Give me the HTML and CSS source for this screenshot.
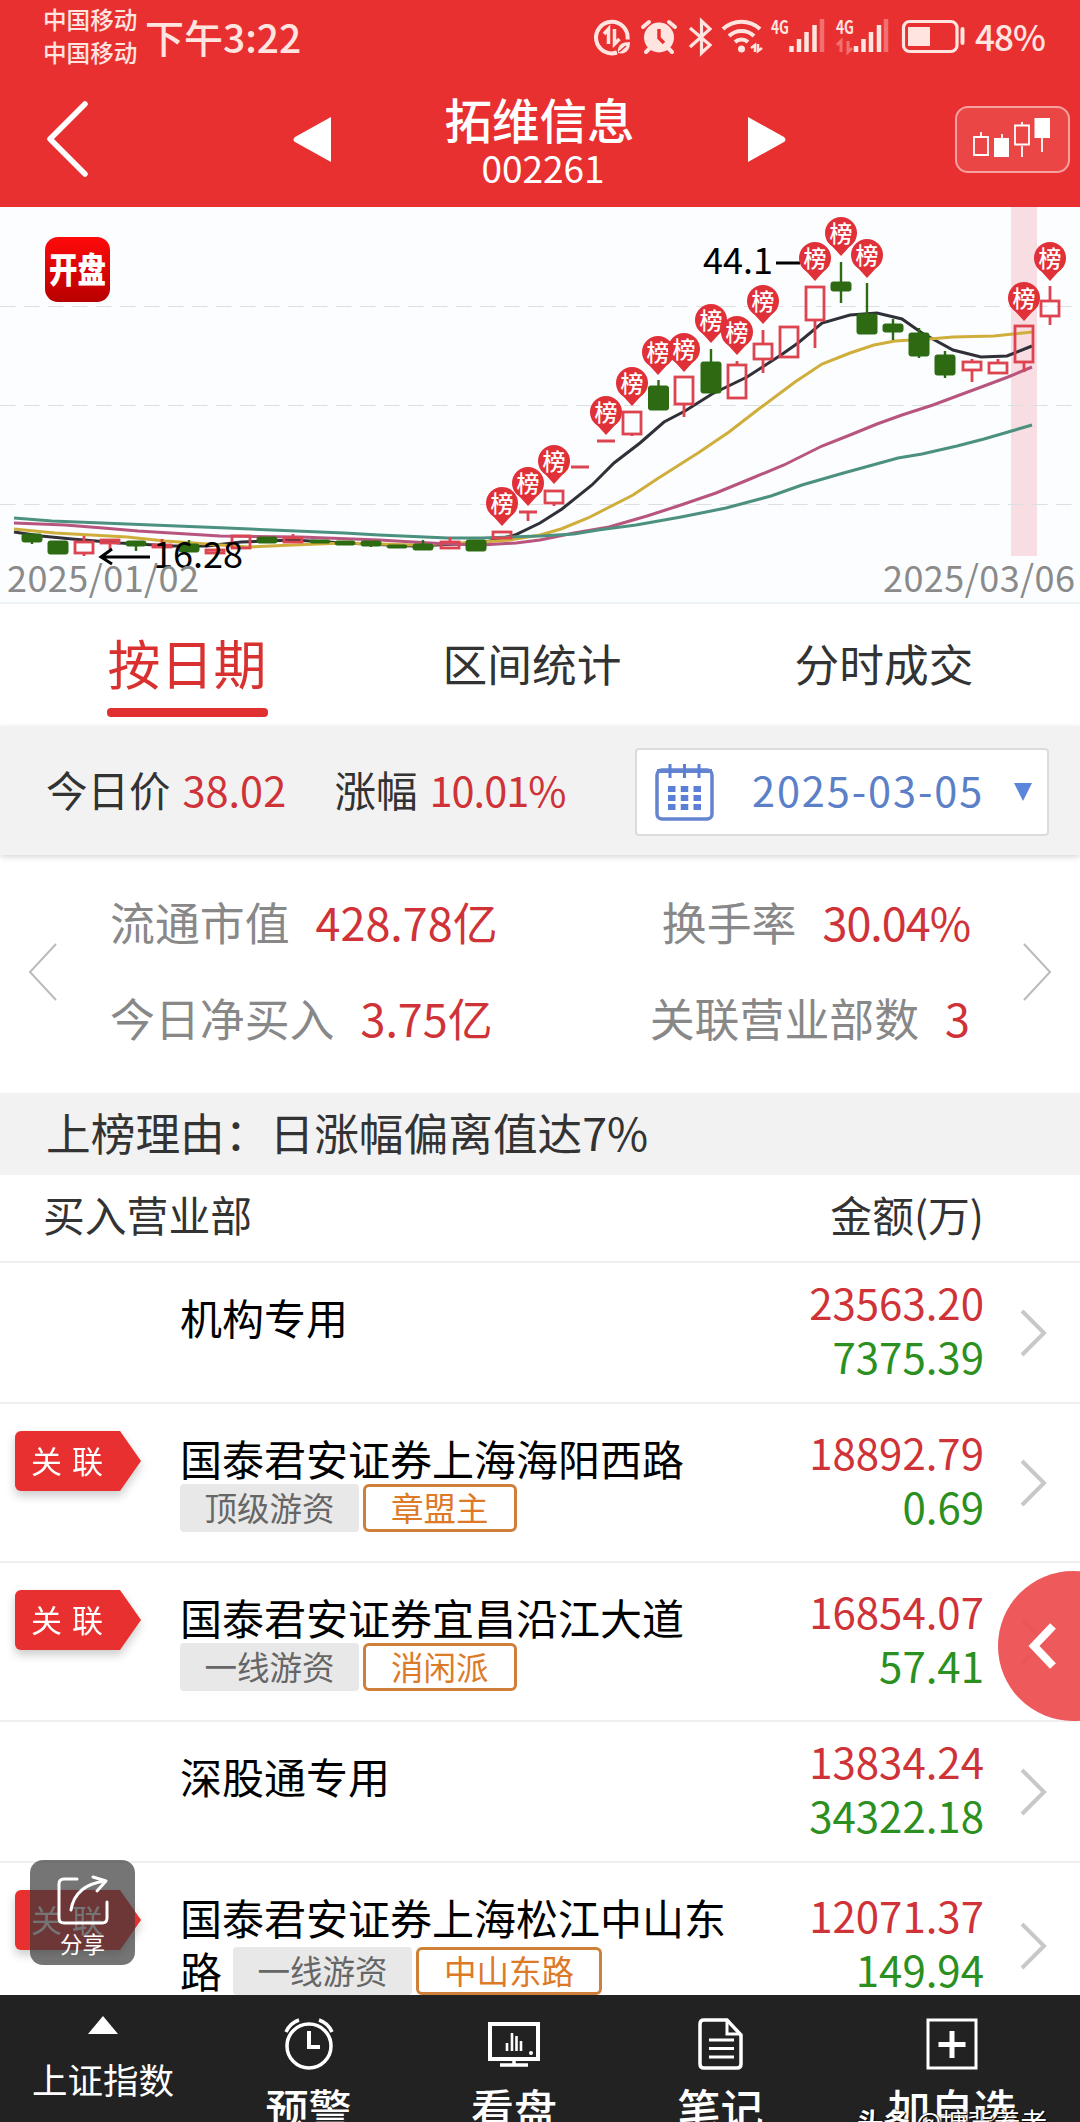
FILE: index.html
```html
<!DOCTYPE html>
<html lang="zh-CN">
<head>
  <meta charset="UTF-8">
  <meta name="viewport" content="width=device-width, initial-scale=1.0">
  <title>拓维信息 002261</title>
  <link rel="stylesheet" href="styles.css">
</head>
<body>
  <div class="app">
    <header class="header">
      <div class="status">
        <div class="status__carrier">
          <span>中国移动</span>
          <span>中国移动</span>
        </div>
        <span class="status__time">下午3:22</span>
        <svg class="status__icons" width="372" height="40" viewBox="594 17 372 40">
          <!-- data saver -->
          <path d="M617 52.5a15.800 15.800 0 1 1 10.500-13" fill="none" stroke="#ffe4e0" stroke-width="4"/>
          <path d="M604 34l4.500-5v15M614.500 29v15l5-5" fill="none" stroke="#ffe4e0" stroke-width="3.500"/>
          <path d="M618 53c-1-8 4-11 12-11 0 8-4 13-12 11z" fill="#ffe4e0"/>
          <path d="M619 52l7-6" stroke="#e83030" stroke-width="1.500"/>
          <!-- alarm -->
          <circle cx="659" cy="37.500" r="15" fill="#ffe4e0"/>
          <path d="M643 27l6-5M675 27l-6-5M646 52l4-4M672 52l-4-4" stroke="#ffe4e0" stroke-width="4" stroke-linecap="round"/>
          <path d="M659 29v9l5 5" fill="none" stroke="#e83030" stroke-width="3.500"/>
          <!-- bluetooth -->
          <path d="M690 28l20 17-8.500 8V21l8.500 8-20 18" fill="none" stroke="#ffe4e0" stroke-width="3.200"/>
          <!-- wifi -->
          <path d="M723 29a27 27 0 0 1 37 0M729 36a18 18 0 0 1 25 0M735 42a10 10 0 0 1 13 0" fill="none" stroke="#ffe4e0" stroke-width="4"/>
          <circle cx="741.500" cy="49" r="3.500" fill="#ffe4e0"/>
          <path d="M751 48l4-3v7M758 44v7l4-3" fill="none" stroke="#ffe4e0" stroke-width="2.500"/>
          <!-- signal 1 -->
          <text class="status__net" x="771" y="34" textLength="18" lengthAdjust="spacingAndGlyphs">4G</text>
          <path d="M791.500 52v-6M799 52V39M806.500 52V32M814.500 52V25" stroke="#ffe4e0" stroke-width="4.500"/>
          <path d="M822 52V19" stroke="#f27070" stroke-width="4.500"/>
          <!-- signal 2 -->
          <text class="status__net" x="836" y="34" textLength="18" lengthAdjust="spacingAndGlyphs">4G</text>
          <path d="M837 45l4-4v11M848 41v11l4-4" fill="none" stroke="#f27070" stroke-width="3"/>
          <path d="M856 52v-6M863.500 52V39M871 52V32M879 52V25" stroke="#ffe4e0" stroke-width="4.500"/>
          <path d="M886 52V19" stroke="#f27070" stroke-width="4.500"/>
          <!-- battery -->
          <rect x="903.500" y="21.500" width="53.500" height="30" rx="6" fill="none" stroke="#ffe4e0" stroke-width="3.200"/>
          <rect x="908" y="27" width="22" height="19" fill="#ffe4e0"/>
          <path d="M962.500 29v14" stroke="#ffe4e0" stroke-width="4" stroke-linecap="round"/>
        </svg>
        <span class="status__battery">48%</span>
      </div>
      <nav class="nav">
        <svg class="nav__back" width="46" height="76" viewBox="0 0 46 76"><path d="M39 3L4 38l35 35" fill="none" stroke="#fff" stroke-width="5.500" stroke-linecap="round" stroke-linejoin="round"/></svg>
        <svg class="nav__prev" width="38" height="45" viewBox="0 0 38 45"><path d="M38 0v45L2 25q-3-2 0-5z" fill="#fff"/></svg>
        <div class="nav__title">
          <h1>拓维信息</h1>
          <p>002261</p>
        </div>
        <svg class="nav__next" width="38" height="45" viewBox="0 0 38 45"><path d="M0 0v45l36-20q3-2 0-5z" fill="#fff"/></svg>
        <div class="nav__kline">
          <svg width="80" height="42" viewBox="0 0 80 42">
            <path d="M1 19h14v18H1zM8 14v5M49 7v-3M49 28v11M42 7.500h14v19H42zM29 16v5M69 20v14" fill="none" stroke="#fff" stroke-width="1.800"/>
            <path d="M21 20h15v19H21zM61.500 0H77v20H61.500z" fill="#fff"/>
          </svg>
        </div>
      </nav>
    </header>

    <section class="chart">
      <svg width="1080" height="397" viewBox="0 207 1080 397">
        <defs>
          <linearGradient id="logo" x1="0" y1="0" x2="0" y2="1">
            <stop offset="0" stop-color="#ff0a0a"/>
            <stop offset="1" stop-color="#b80000"/>
          </linearGradient>
          <g id="pin">
            <path d="M-14.500 7L0 23 14.500 7z" fill="#e03038"/>
            <circle r="16" fill="#e03038"/>
            <text class="chart__pin" y="9" text-anchor="middle">榜</text>
          </g>
        </defs>

        <rect x="1011" y="206" width="26" height="350" fill="#f8dde3"/>
        <path class="chart__grid" d="M0 306.500h1080M0 405.500h1080M0 504.500h1080"/>

        <rect x="45" y="237" width="65" height="65" rx="13" fill="url(#logo)"/>
        <text class="chart__logo" transform="translate(77.500 283) scale(1 1.250)" text-anchor="middle">开盘</text>

        <!-- moving averages -->
        <path class="chart__ma" stroke="#2f3038" d="M14 532L41 536 72 539 120 543 172 546 207 546 241 542 293 540 344 543 413 546 482 543 515 535 540 523 562 509 592 485 614 463 640 443 664 422 685 411 712 394 747 377 781 355 798 343 822 323 850 315 877 313 902 319 922 333 953 350 981 357 1007 356 1032 346"/>
        <path class="chart__ma" stroke="#cfae3c" d="M14 529L55 533 127 537 165 541 207 544 248 547 293 545 344 543 413 545 482 542 510 540 540 535 561 529 588 518 633 495 657 479 698 453 729 432 760 408 795 382 822 364 850 353 874 345 895 341 929 339 953 337 994 336 1032 332"/>
        <path class="chart__ma" stroke="#b8557f" d="M14 523L65 525 103 528 138 531 220 536 300 537 379 540 448 544 482 545 516 543 540 540 574 533 609 527 647 516 678 506 716 493 750 479 784 465 822 446 850 435 877 424 902 415 933 405 957 396 984 386 1008 377 1032 367"/>
        <path class="chart__ma" stroke="#4c917f" d="M14 518L52 521 227 528 344 533 379 535 448 538 482 538 540 536 574 534 598 530 636 525 681 517 726 508 771 496 802 485 840 474 898 458 922 454 957 446 984 439 1032 425"/>

        <!-- falling days -->
        <g class="chart__down">
          <path d="M32 538v6M136 541v10M189 540v8M371 543v4M423 540v8M658.500 380v10M711 349v20M841 262v41M867 283v34M893 319v21M919 328v30M945 351v27"/>
          <rect x="22" y="534" width="20" height="8"/>
          <rect x="48" y="541" width="20" height="13"/>
          <rect x="126" y="541" width="20" height="5"/>
          <rect x="179" y="544" width="20" height="8"/>
          <rect x="257" y="537" width="20" height="6"/>
          <rect x="310" y="540" width="20" height="3"/>
          <rect x="335" y="541" width="20" height="4"/>
          <rect x="361" y="541" width="20" height="5"/>
          <rect x="387" y="545" width="20" height="3"/>
          <rect x="413" y="544" width="20" height="6"/>
          <rect x="466" y="540" width="20" height="11"/>
          <rect x="648.500" y="386" width="20" height="24"/>
          <rect x="701" y="362" width="20" height="31"/>
          <rect x="831" y="282" width="20" height="9"/>
          <rect x="857" y="314" width="20" height="20"/>
          <rect x="883" y="324" width="20" height="8"/>
          <rect x="909" y="333" width="20" height="23"/>
          <rect x="935" y="355" width="20" height="20"/>
        </g>

        <!-- rising days -->
        <g class="chart__up">
          <path d="M84 536v6M84 553v3M110 544v5M162 539v6M293 534v4M450 537v4M519 512h18M528 512v9M554 504v2M571 467h18M597 441h18M632 434v2M684 404v13M737 361v4M763 330v14M763 359v14M815 321v27M972 359v3M972 371v11M998 359v4M1024 362v10M1050 286v15M1050 316v9"/>
          <rect x="75" y="542" width="18" height="11"/>
          <rect x="101" y="540" width="18" height="3"/>
          <rect x="153" y="545" width="18" height="2"/>
          <rect x="206" y="550" width="18" height="3"/>
          <rect x="232" y="536" width="18" height="12"/>
          <rect x="284" y="538" width="18" height="4"/>
          <rect x="441" y="542" width="18" height="6"/>
          <rect x="493" y="532" width="18" height="6"/>
          <rect x="545" y="491" width="18" height="12"/>
          <rect x="623" y="412" width="18" height="22"/>
          <rect x="675" y="377" width="18" height="27"/>
          <rect x="728" y="365" width="18" height="33"/>
          <rect x="754" y="344" width="18" height="15"/>
          <rect x="780" y="327" width="18" height="30"/>
          <rect x="806" y="287" width="18" height="33"/>
          <rect x="963" y="362" width="18" height="8"/>
          <rect x="989" y="363" width="18" height="10"/>
          <rect x="1015" y="326" width="18" height="36"/>
          <rect x="1041" y="301" width="18" height="15"/>
        </g>

        <use href="#pin" x="502" y="503"/>
        <use href="#pin" x="528" y="483"/>
        <use href="#pin" x="554" y="461"/>
        <use href="#pin" x="606" y="412"/>
        <use href="#pin" x="632" y="383"/>
        <use href="#pin" x="658" y="352"/>
        <use href="#pin" x="684" y="349"/>
        <use href="#pin" x="711" y="320"/>
        <use href="#pin" x="737" y="332"/>
        <use href="#pin" x="763" y="301"/>
        <path d="M776 263h24" stroke="#000" stroke-width="3"/>
        <use href="#pin" x="815" y="258"/>
        <use href="#pin" x="841" y="233"/>
        <use href="#pin" x="867" y="255"/>
        <use href="#pin" x="1024" y="298"/>
        <use href="#pin" x="1050" y="258"/>

        <text class="chart__label" x="703" y="274" textLength="70">44.1</text>
        <path d="M150 557h-48M112 549l-11 8 11 7" fill="none" stroke="#000" stroke-width="3"/>
        <text class="chart__label" x="153" y="568" textLength="90">16.28</text>
        <text class="chart__date" x="7" y="592" textLength="192">2025/01/02</text>
        <text class="chart__date" x="883" y="592" textLength="192">2025/03/06</text>
      </svg>
    </section>

    <div class="tabs">
      <div class="tabs__item tabs__item--active">按日期</div>
      <div class="tabs__item">区间统计</div>
      <div class="tabs__item">分时成交</div>
    </div>

    <section class="quote">
      <span class="quote__name">今日价</span>
      <span class="quote__value quote__price">38.02</span>
      <span class="quote__name">涨幅</span>
      <span class="quote__value percent">10.01%</span>
      <div class="datebox">
        <svg width="60" height="60" viewBox="0 0 60 60">
          <rect x="2" y="8" width="55" height="49" rx="5" fill="none" stroke="#6484cf" stroke-width="3.500"/>
          <path d="M2 9h55" stroke="#6484cf" stroke-width="4"/>
          <path d="M15 2v14M29.500 2v14M44 2v14" stroke="#5b7fd6" stroke-width="3"/>
          <path d="M13 27h33M13 36h33M13 45h33" stroke="#5b7fd6" stroke-width="6" stroke-dasharray="7.500 5.250"/>
        </svg>
        <span>2025-03-05</span>
        <svg class="datebox__arrow" width="18" height="18" viewBox="0 0 18 18"><path d="M0 0h18L9 18z" fill="#5b86dc"/></svg>
      </div>
    </section>

    <section class="stats">
      <svg width="30" height="58" viewBox="0 0 30 58"><path d="M28 1L2 29l26 28" fill="none" stroke="#bbb" stroke-width="2"/></svg>
      <div class="stats__grid">
        <div>流通市值<b>428.78亿</b></div>
        <div>换手率<b class="percent">30.04%</b></div>
        <div>今日净买入<b>3.75亿</b></div>
        <div>关联营业部数<b>3</b></div>
      </div>
      <svg width="30" height="58" viewBox="0 0 30 58"><path d="M2 1l26 28L2 57" fill="none" stroke="#bbb" stroke-width="2"/></svg>
    </section>

    <div class="reason">上榜理由：日涨幅偏离值达7%</div>

    <div class="list-head">
      <span>买入营业部</span>
      <span>金额(万)</span>
    </div>

    <section class="list">
      <div class="row row--short">
        <div class="row__badge"></div>
        <div class="row__name">机构专用</div>
        <div class="row__amount"><span>23563.20</span><span class="green">7375.39</span></div>
        <svg class="row__more" width="28" height="48" viewBox="0 0 28 48"><path d="M3 2l22 22L3 46" fill="none" stroke="#c8c8c8" stroke-width="4"/></svg>
      </div>
      <div class="row">
        <div class="row__badge"><span class="badge">关 联</span></div>
        <div class="row__name">国泰君安证券上海海阳西路
          <div class="tags"><span class="tag">顶级游资</span><span class="tag tag--orange">章盟主</span></div>
        </div>
        <div class="row__amount"><span>18892.79</span><span class="green">0.69</span></div>
        <svg class="row__more" width="28" height="48" viewBox="0 0 28 48"><path d="M3 2l22 22L3 46" fill="none" stroke="#c8c8c8" stroke-width="4"/></svg>
      </div>
      <div class="row">
        <div class="row__badge"><span class="badge">关 联</span></div>
        <div class="row__name">国泰君安证券宜昌沿江大道
          <div class="tags"><span class="tag">一线游资</span><span class="tag tag--orange">消闲派</span></div>
        </div>
        <div class="row__amount"><span>16854.07</span><span class="green">57.41</span></div>
        <svg class="row__more" width="28" height="48" viewBox="0 0 28 48"><path d="M3 2l22 22L3 46" fill="none" stroke="#c8c8c8" stroke-width="4"/></svg>
      </div>
      <div class="row row--short">
        <div class="row__badge"></div>
        <div class="row__name">深股通专用</div>
        <div class="row__amount"><span>13834.24</span><span class="green">34322.18</span></div>
        <svg class="row__more" width="28" height="48" viewBox="0 0 28 48"><path d="M3 2l22 22L3 46" fill="none" stroke="#c8c8c8" stroke-width="4"/></svg>
      </div>
      <div class="row row--tall">
        <div class="row__badge"><span class="badge">关 联</span></div>
        <div class="row__name">国泰君安证券上海松江中山东
          <div class="row__wrap">路<span class="tag">一线游资</span><span class="tag tag--orange">中山东路</span></div>
        </div>
        <div class="row__amount"><span>12071.37</span><span class="green">149.94</span></div>
        <svg class="row__more" width="28" height="48" viewBox="0 0 28 48"><path d="M3 2l22 22L3 46" fill="none" stroke="#c8c8c8" stroke-width="4"/></svg>
      </div>
    </section>

    <footer class="toolbar">
      <div class="toolbar__item toolbar__item--index">
        <svg width="30" height="18" viewBox="0 0 30 18"><path d="M15 0l15 18H0z" fill="#fff"/></svg>
        <span>上证指数</span>
        <em>3341.96</em>
      </div>
      <div class="toolbar__item">
        <svg width="52" height="52" viewBox="0 0 52 52">
          <g fill="none" stroke="#fff" stroke-width="3.500">
            <circle cx="26" cy="28" r="22"/>
            <path d="M26 13v16h11" stroke-width="4"/>
            <path d="M3 14Q7 5 16 2M49 14Q45 5 36 2"/>
          </g>
        </svg>
        <span>预警</span>
      </div>
      <div class="toolbar__item">
        <svg width="52" height="52" viewBox="0 0 52 52">
          <g fill="none" stroke="#fff">
            <path d="M2 6h48v35H2z" stroke-width="4"/>
            <path d="M26 41v6M12 47h28" stroke-width="3.500"/>
            <path d="M19 33v-8M24 33V15M28.500 33V18M33 33V23" stroke-width="2.600"/>
          </g>
          <circle cx="43" cy="35" r="2" fill="#fff"/>
        </svg>
        <span>看盘</span>
      </div>
      <div class="toolbar__item">
        <svg width="52" height="52" viewBox="0 0 52 52">
          <g fill="none" stroke="#fff" stroke-width="3.500">
            <path d="M9 2h23l14 15v29q0 4-4 4H9q-4 0-4-4V6q0-4 4-4z"/>
            <path d="M32 2v14h14M14 22h25M14 30.500h25M14 39h25" stroke-width="3"/>
          </g>
        </svg>
        <span>笔记</span>
      </div>
      <div class="toolbar__item toolbar__item--add">
        <svg width="52" height="52" viewBox="0 0 52 52">
          <path d="M2 2h48v48H2z" fill="none" stroke="#fff" stroke-width="3"/>
          <path d="M26 13v27M12.500 26.500h27" stroke="#fff" stroke-width="5"/>
        </svg>
        <span>加自选</span>
      </div>
    </footer>

    <!-- floating controls -->
    <div class="share">
      <svg width="52" height="50" viewBox="0 0 52 50">
        <g fill="none" stroke="#fff" stroke-width="3" stroke-linecap="round" stroke-linejoin="round">
          <path d="M20 4H7q-5 0-5 5v34q0 5 5 5h38q5 0 5-5V27"/>
          <path d="M14 35Q18 10 48 6M36 2l13 4-9 10"/>
        </g>
      </svg>
      <span>分享</span>
    </div>
    <div class="drawer">
      <svg width="32" height="48" viewBox="0 0 32 48"><path d="M27 4L8 24l19 20" fill="none" stroke="#fff" stroke-width="8"/></svg>
    </div>
    <div class="watermark"><b>头条</b> @塘背养老</div>
  </div>
</body>
</html>
```
FILE: styles.css
```css
* {
  box-sizing: border-box;
}

body {
  margin: 0;
  background: #fff;
  font-family: "Noto Sans CJK SC", sans-serif;
  color: #333;
}

svg {
  display: block;
  flex: none;
}

.app {
  position: relative;
  display: flex;
  flex-direction: column;
  width: 1080px;
  height: 2122px;
  overflow: hidden;
  white-space: nowrap;
}

/* Header */
.header {
  height: 207px;
  flex: none;
  background: #e83030;
  color: #fff;
}

.status {
  display: flex;
  align-items: center;
  height: 74px;
  padding-left: 43px;
  color: #ffe4e0;
}

.status__carrier {
  display: flex;
  flex-direction: column;
  width: 102px;
  padding-bottom: 2px;
  font-size: 23.6px;
  font-weight: 500;
  line-height: 33px;
}

.status__time {
  width: 449px;
  padding-bottom: 3px;
  font-size: 39px;
  font-weight: 500;
  line-height: 50px;
}

.status__net {
  font-size: 18px;
  font-weight: 700;
  fill: #ffe4e0;
}

.status__battery {
  margin-left: 9px;
  padding-bottom: 2px;
  font-size: 35px;
  font-weight: 500;
  letter-spacing: -1px;
  line-height: 50px;
}

.nav {
  display: flex;
  align-items: center;
  height: 132px;
  padding: 0 10px 2px 46px;
}

.nav__prev {
  margin-left: 201px;
}

.nav__title {
  width: 417px;
  text-align: center;
}

.nav__title h1 {
  margin: 2px 0 0;
  font-size: 47.5px;
  font-weight: 500;
  line-height: 56px;
}

.nav__title p {
  margin: -2px 0 0 7px;
  font-size: 37px;
  line-height: 44px;
}

.nav__kline {
  display: flex;
  align-items: center;
  justify-content: center;
  width: 115px;
  height: 67px;
  margin-left: auto;
  border: 2px solid #f6a0a0;
  border-radius: 13px;
  background: #ea4646;
}

/* Chart */
.chart {
  height: 397px;
  flex: none;
  background: #fbfdff;
  border-bottom: 2px solid #eff2f5;
}

.chart__grid {
  stroke: #dde0e2;
  stroke-width: 1;
  stroke-dasharray: 15.5 8.5;
}

.chart__ma {
  fill: none;
  stroke-width: 3;
}

.chart__down {
  fill: #2d6a12;
  stroke: #2d6a12;
  stroke-width: 2.4;
}

.chart__down rect {
  stroke-width: 1;
  rx: 2px;
}

.chart__up {
  fill: none;
  stroke: #dd4450;
  stroke-width: 2.8;
}

.chart__pin {
  font-size: 23px;
  font-weight: 500;
  fill: #fff;
}

.chart__logo {
  font-size: 28.5px;
  font-weight: 900;
  fill: #fff;
}

.chart__label {
  font-size: 36px;
  fill: #000;
}

.chart__date {
  font-size: 36px;
  fill: #8a8a8a;
}

/* Tabs */
.tabs {
  display: grid;
  grid-template-columns: 374px 316px 388px;
  justify-items: center;
  height: 122px;
  flex: none;
}

.tabs__item {
  position: relative;
  height: 113px;
  padding: 0 1px;
  font-size: 44.7px;
  line-height: 118px;
}

.tabs__item--active {
  font-size: 53px;
  line-height: 116px;
  color: #d93030;
}

.tabs__item--active::after {
  content: "";
  position: absolute;
  left: 0;
  right: 0;
  bottom: 0;
  height: 9px;
  border-radius: 4px;
  background: #e03030;
}

/* Price and date */
.quote {
  display: flex;
  align-items: center;
  height: 129px;
  flex: none;
  padding: 2px 31px 0 46px;
  background: #f2f2f2;
  box-shadow: 0 2px 6px rgba(0, 0, 0, 0.16);
  font-size: 41.5px;
  line-height: 60px;
}

.quote > span {
  margin-top: -6px;
}

.quote__value {
  margin-left: 12px;
  color: #cf3338;
}

.quote__price {
  width: 152px;
}

.percent {
  letter-spacing: -1px;
}

.datebox {
  display: flex;
  align-items: center;
  width: 414px;
  height: 88px;
  margin-left: auto;
  padding: 0 15px 0 18px;
  border: 2px solid #dcdcdc;
  border-radius: 4px;
  background: #fff;
  color: #5b80c8;
}

.datebox span {
  margin: -5px 0 0 37px;
  letter-spacing: 1.9px;
}

.datebox__arrow {
  margin-left: auto;
}

/* Stats */
.stats {
  display: flex;
  align-items: center;
  justify-content: space-between;
  height: 238px;
  flex: none;
  padding: 0 28px 4px;
}

.stats__grid {
  display: grid;
  grid-template-columns: auto auto;
  justify-content: space-between;
  width: 860px;
  margin-bottom: 5px;
  font-size: 44.9px;
  line-height: 96px;
  color: #888;
}

.stats__grid div:nth-child(even) {
  text-align: right;
}

.stats__grid b {
  margin-left: 26px;
  font-weight: 400;
  color: #cf3338;
}

.reason {
  height: 82px;
  flex: none;
  padding-left: 46px;
  background: #f2f2f2;
  font-size: 44.7px;
  line-height: 77px;
}

.list-head {
  display: flex;
  justify-content: space-between;
  height: 88px;
  flex: none;
  padding: 0 96px 0 43px;
  border-bottom: 2px solid #efefef;
  font-size: 41.8px;
  line-height: 79px;
}

/* Broker list */
.list {
  height: 732px;
  flex: none;
  overflow: hidden;
}

.row {
  display: flex;
  align-items: center;
  height: 159px;
  border-bottom: 2px solid #efefef;
}

.row--short {
  height: 141px;
}

.row--tall {
  height: 168px;
}

.row__badge {
  align-self: flex-start;
  width: 180px;
  padding: 27px 0 0 15px;
  filter: drop-shadow(0 5px 5px rgba(0, 0, 0, 0.2));
}

.badge {
  display: block;
  width: 126px;
  height: 60px;
  padding-left: 16px;
  border-radius: 6px 0 0 6px;
  background: #e83030;
  clip-path: polygon(0 0, 105px 0, 100% 50%, 105px 100%, 0 100%);
  font-size: 31px;
  line-height: 58px;
  word-spacing: 3px;
  color: #fff;
}

.row__name {
  align-self: flex-start;
  padding-top: 27px;
  font-size: 42px;
  line-height: 53px;
  color: #000;
}

.tags,
.row__wrap {
  display: flex;
}

.row__wrap .tag {
  margin-top: 4px;
}

.tag {
  height: 48px;
  padding: 0 24.5px;
  border-radius: 4px;
  background: #e8e8e8;
  font-size: 32.5px;
  line-height: 46px;
  color: #666;
}

.tag--orange {
  margin-left: 4px;
  padding: 0 25px;
  border: 3px solid #cf8038;
  border-radius: 6px;
  background: #fff;
  line-height: 40px;
  color: #dd7a28;
}

.row__wrap .tag:first-child {
  margin-left: 11px;
}

.row__amount {
  display: flex;
  flex-direction: column;
  align-items: flex-end;
  margin: -8px 35px 0 auto;
  font-size: 42px;
  line-height: 54px;
  color: #cf3338;
}

.row__amount .green {
  color: #2c9020;
}

.row__more {
  margin-right: 33px;
}

/* Bottom toolbar */
.toolbar {
  display: grid;
  grid-template-columns: 206px 205px 206px 207px 256px;
  height: 127px;
  flex: none;
  overflow: hidden;
  background: #222;
  color: #fff;
}

.toolbar__item {
  display: flex;
  flex-direction: column;
  align-items: center;
  padding-top: 23px;
  font-size: 43px;
  font-weight: 500;
  line-height: 60px;
}

.toolbar__item span {
  margin-top: 7px;
}

.toolbar__item--index {
  padding-top: 21px;
  font-size: 35.5px;
  font-weight: 400;
}

.toolbar__item--index span {
  margin-top: 15px;
}

.toolbar__item--index em {
  margin-top: -6px;
  font-style: normal;
  color: #2c9020;
}

/* Floating */
.share {
  position: absolute;
  left: 30px;
  top: 1860px;
  display: flex;
  flex-direction: column;
  align-items: center;
  width: 105px;
  height: 105px;
  padding-top: 15px;
  border-radius: 13px;
  background: rgba(58, 58, 58, 0.7);
  font-size: 22.5px;
  line-height: 36px;
  color: #fff;
}

.drawer {
  position: absolute;
  left: 998px;
  top: 1571px;
  display: flex;
  align-items: center;
  width: 150px;
  height: 150px;
  padding-left: 28px;
  border-radius: 50%;
  background: rgba(237, 80, 82, 0.95);
}

.watermark {
  position: absolute;
  left: 857px;
  top: 2101px;
  font-size: 26.5px;
  line-height: 40px;
  color: #fff;
  text-shadow: 0 0 2px #000, 1px 1px 1px #000;
}
```
